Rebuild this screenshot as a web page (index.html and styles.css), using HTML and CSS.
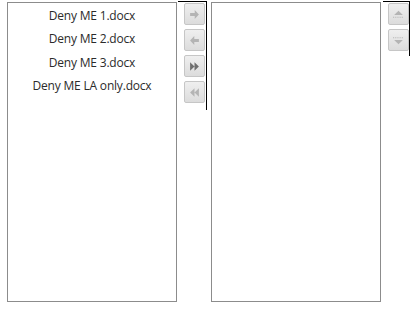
FILE: index.html
```html
<!DOCTYPE html>
<html>
<head>
<meta charset="utf-8">
<link rel="stylesheet" href="styles.css">
</head>
<body>
<div class="picker">
  <div class="list source">
    <div class="item">Deny ME 1.docx</div>
    <div class="item">Deny ME 2.docx</div>
    <div class="item">Deny ME 3.docx</div>
    <div class="item">Deny ME LA only.docx</div>
  </div>
  <div class="btncol">
    <div class="btn"><svg viewBox="0 0 10 10" width="11" height="11"><path class="dis" d="M1 3.7h4.2V1l3.8 4-3.8 4V6.3H1z"/></svg></div>
    <div class="btn"><svg viewBox="0 0 10 10" width="11" height="11"><path class="dis" d="M9 3.7H4.8V1L1 5l3.8 4V6.3H9z"/></svg></div>
    <div class="btn"><svg viewBox="0 0 10 10" width="11" height="11"><path class="en" d="M1 1.2l4 3.8-4 3.8zM5 1.2l4 3.8-4 3.8z"/></svg></div>
    <div class="btn"><svg viewBox="0 0 10 10" width="11" height="11"><path class="dis" d="M9 1.2L5 5l4 3.8zM5 1.2L1 5l4 3.8z"/></svg></div>
  </div>
  <div class="list target"></div>
  <div class="btncol small">
    <div class="btn"><svg viewBox="0 0 12 12" width="13" height="13"><path class="dis" d="M2 6.5L6 2.5l4 4z"/><path class="dot" d="M1 8.5h10"/></svg></div>
    <div class="btn"><svg viewBox="0 0 12 12" width="13" height="13"><path class="dot" d="M1 3.5h10"/><path class="dis" d="M2 5.5l4 4 4-4z"/></svg></div>
  </div>
</div>
</body>
</html>
```
FILE: styles.css
```css
html, body {
  margin: 0;
  padding: 0;
  background: #ffffff;
}
.picker {
  display: flex;
  align-items: flex-start;
  padding: 2px 0 0 7px;
  font-family: "Open Sans", "Noto Sans", sans-serif;
}
.list {
  width: 168px;
  height: 298px;
  border: 1px solid #8c8c8c;
  background: #fff;
}
.source {
  padding-top: 1px;
  height: 297px;
}
.target {
  margin-left: 4px;
}
.item {
  height: 23.4px;
  line-height: 23px;
  text-align: center;
  font-size: 12px;
  color: #2b2b2b;
  letter-spacing: -0.2px;
}
.btncol {
  margin-top: -1px;
  margin-left: 1px;
  width: 22px;
  height: 103px;
  padding: 1px 0 4px 6px;
  border-top: 1px solid #000;
  border-right: 1px solid #000;
  display: flex;
  flex-direction: column;
  gap: 4px;
}
.btncol.small {
  margin-left: 2px;
  width: 21px;
  height: 48px;
  padding: 1px 0 5px 5px;
  gap: 4px;
}
.btn {
  width: 19px;
  height: 20px;
  border: 1px solid #c6c6c6;
  border-radius: 2px;
  background: linear-gradient(#efefef, #dcdcdc);
  display: flex;
  align-items: center;
  justify-content: center;
}
.btn svg {
  display: block;
}
.dis {
  fill: #b4b4b4;
}
.en {
  fill: #6e6e6e;
}
.dot {
  stroke: #b4b4b4;
  stroke-width: 1;
  stroke-dasharray: 1 1;
  fill: none;
}
```
